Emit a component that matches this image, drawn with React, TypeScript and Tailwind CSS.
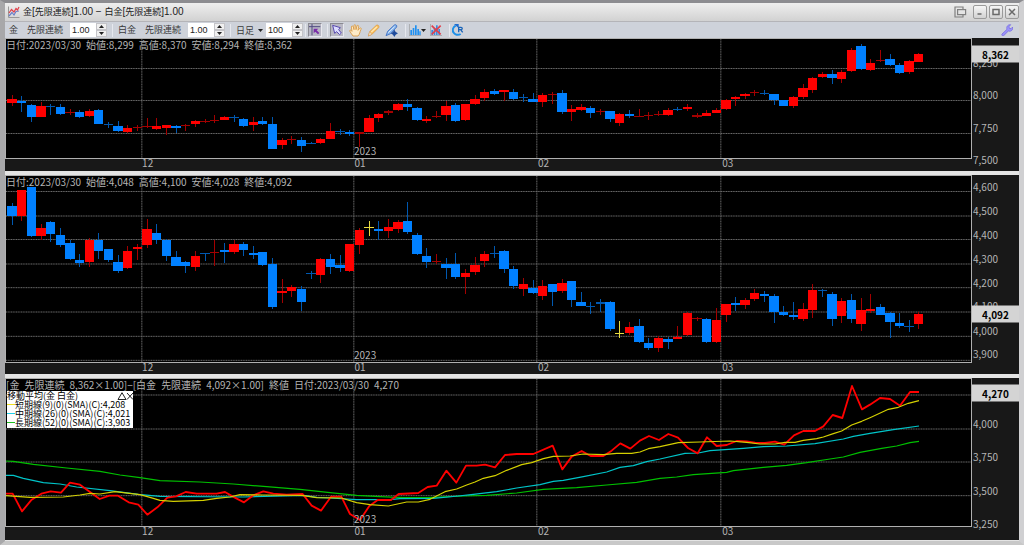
import React from "react";

const JP = "font-['Liberation_Sans','Noto_Sans_CJK_JP',sans-serif]";
const GRID = "font-['Noto_Sans_CJK_JP',sans-serif]";

type Candle = [string, number, number, number, number];
type Point = [number, number];

// kind (r: up, b: down, y: unchanged), body top, body bottom, wick top, wick bottom
const GOLD: Candle[] = [
  ["r", 188, 200, 177, 211], ["b", 195, 200, 179, 227], ["b", 206, 243, 204, 257], ["r", 209, 243, 198, 243],
  ["b", 209, 213, 205, 238], ["b", 213, 235, 203, 237], ["r", 228, 231, 220, 237], ["b", 228, 243, 222, 247],
  ["r", 224, 241, 219, 244], ["b", 223, 264, 219, 265], ["b", 263, 266, 259, 275], ["b", 270, 285, 255, 287],
  ["r", 275, 288, 268, 292], ["r", 273, 276, 266, 285], ["r", 270, 273, 245, 276], ["r", 271, 280, 247, 282],
  ["r", 268, 275, 266, 297], ["b", 271, 277, 268, 291], ["r", 266, 270, 264, 285], ["r", 254, 263, 252, 274],
  ["r", 255, 257, 250, 262], ["r", 251, 254, 236, 262], ["r", 243, 251, 240, 253], ["b", 243, 246, 237, 259],
  ["b", 249, 270, 245, 274], ["r", 257, 268, 242, 285], ["b", 255, 263, 242, 268], ["b", 264, 339, 243, 339],
  ["r", 313, 327, 305, 338], ["r", 309, 312, 300, 324], ["b", 312, 329, 304, 348], ["b", 320, 323, 318, 325],
  ["r", 308, 322, 305, 323], ["r", 286, 308, 262, 309], ["b", 285, 288, 279, 298], ["b", 288, 293, 282, 301],
  ["r", 289, 293, 289, 334], ["r", 246, 287, 238, 287], ["r", 234, 245, 230, 258], ["r", 226, 230, 221, 237],
  ["r", 203, 223, 201, 224], ["b", 203, 214, 189, 225], ["b", 216, 251, 214, 254], ["r", 248, 256, 239, 262],
  ["r", 240, 244, 226, 247], ["r", 210, 238, 196, 254], ["b", 207, 256, 202, 259], ["r", 203, 251, 203, 254],
  ["r", 189, 204, 177, 207], ["r", 168, 185, 160, 196], ["b", 165, 174, 159, 177], ["r", 162, 169, 161, 196],
  ["b", 167, 188, 160, 191], ["b", 183, 186, 174, 197], ["b", 190, 198, 172, 199], ["r", 177, 197, 172, 212],
  ["r", 173, 176, 169, 205], ["b", 170, 228, 161, 233], ["r", 219, 228, 207, 254], ["r", 213, 222, 204, 226],
  ["b", 215, 230, 210, 245], ["r", 225, 228, 219, 237], ["b", 226, 249, 224, 259], ["r", 234, 261, 232, 270],
  ["b", 234, 240, 222, 246], ["r", 239, 243, 219, 244], ["r", 237, 240, 227, 252], ["r", 233, 236, 224, 239],
  ["r", 222, 238, 217, 240], ["b", 219, 223, 214, 226], ["r", 214, 220, 205, 226], ["r", 238, 242, 232, 247],
  ["r", 231, 240, 222, 241], ["r", 222, 231, 215, 232], ["r", 191, 220, 190, 223], ["r", 184, 190, 179, 209],
  ["r", 174, 181, 170, 190], ["r", 168, 172, 162, 181], ["b", 170, 174, 162, 178], ["b", 174, 193, 174, 207],
  ["b", 193, 209, 191, 211], ["r", 184, 209, 181, 216], ["r", 157, 184, 145, 190], ["r", 127, 161, 122, 171],
  ["r", 115, 124, 108, 127], ["b", 115, 126, 103, 143], ["r", 108, 129, 102, 141], ["r", 43, 104, 36, 107],
  ["b", 31, 98, 24, 103], ["r", 81, 102, 68, 104], ["r", 72, 76, 42, 77], ["b", 70, 87, 55, 91],
  ["b", 87, 112, 82, 115], ["r", 76, 107, 72, 115], ["r", 55, 77, 50, 78],
];

const PLATINUM: Candle[] = [
  ["b", 101, 131, 94, 159], ["r", 54, 133, 54, 147], ["b", 44, 191, 44, 194], ["r", 167, 191, 156, 204],
  ["b", 150, 186, 148, 209], ["b", 188, 218, 169, 224], ["b", 212, 261, 205, 263], ["b", 264, 272, 245, 284],
  ["r", 205, 269, 198, 284], ["b", 203, 236, 183, 261], ["b", 231, 263, 231, 271], ["b", 269, 296, 250, 302],
  ["r", 238, 287, 222, 292], ["r", 226, 231, 216, 263], ["r", 170, 218, 141, 227], ["b", 183, 203, 157, 216],
  ["b", 204, 251, 202, 267], ["b", 256, 282, 237, 283], ["b", 270, 282, 266, 302], ["r", 252, 284, 238, 296],
  ["b", 243, 246, 243, 266], ["r", 240, 244, 205, 281], ["b", 234, 239, 214, 272], ["r", 217, 239, 203, 245],
  ["b", 217, 234, 210, 253], ["b", 242, 248, 222, 261], ["b", 240, 279, 240, 281], ["b", 276, 404, 257, 411],
  ["r", 356, 364, 320, 392], ["r", 345, 357, 338, 375], ["b", 351, 390, 342, 416], ["b", 303, 307, 297, 320],
  ["r", 260, 308, 258, 333], ["b", 260, 284, 245, 305], ["b", 278, 288, 250, 300], ["r", 217, 296, 216, 299],
  ["r", 174, 220, 168, 246], ["y", 165, 168, 146, 192], ["b", 170, 178, 146, 203], ["r", 165, 178, 142, 199],
  ["r", 149, 171, 144, 182], ["b", 146, 181, 90, 187], ["b", 190, 246, 182, 248], ["b", 252, 270, 228, 289],
  ["r", 266, 270, 247, 277], ["b", 276, 288, 259, 320], ["b", 276, 315, 242, 321], ["r", 304, 315, 290, 366],
  ["r", 278, 300, 255, 309], ["r", 247, 268, 238, 284], ["b", 242, 245, 223, 259], ["b", 236, 291, 234, 303],
  ["b", 292, 341, 283, 351], ["r", 337, 352, 319, 371], ["b", 348, 364, 323, 366], ["r", 342, 371, 325, 384],
  ["b", 335, 360, 335, 402], ["r", 332, 357, 321, 363], ["b", 328, 385, 328, 404], ["b", 389, 402, 360, 403],
  ["b", 402, 405, 391, 425], ["b", 391, 395, 381, 419], ["b", 391, 472, 387, 476], ["y", 483, 486, 448, 497],
  ["r", 466, 482, 450, 488], ["b", 462, 510, 440, 512], ["b", 514, 527, 499, 534], ["r", 499, 527, 493, 541],
  ["b", 502, 510, 496, 531], ["r", 495, 500, 461, 501], ["r", 424, 489, 420, 491], ["r", 437, 441, 435, 448],
  ["b", 441, 510, 438, 514], ["r", 444, 510, 407, 512], ["r", 396, 430, 395, 449], ["b", 393, 399, 376, 416],
  ["r", 384, 400, 378, 411], ["r", 363, 381, 351, 387], ["b", 366, 372, 356, 390], ["b", 372, 419, 367, 452],
  ["b", 420, 429, 402, 431], ["b", 429, 435, 391, 444], ["r", 412, 441, 393, 446], ["r", 354, 413, 337, 439],
  ["b", 353, 357, 350, 374], ["b", 365, 441, 360, 461], ["r", 387, 433, 378, 453], ["b", 384, 442, 365, 452],
  ["r", 415, 456, 377, 478], ["r", 412, 418, 365, 423], ["b", 405, 429, 396, 430], ["b", 424, 449, 420, 498],
  ["b", 453, 461, 422, 468], ["b", 462, 465, 444, 480], ["r", 426, 456, 420, 470],
];

const shift = (dx: number, pts: Point[]): Point[] => pts.map(([x, y]) => [x + dx, y]);

const SPREAD: Point[] = [
  [18, 371], [38, 371], [66, 424], [95, 389], [124, 371], [152, 364], [183, 368], [210, 338], [240, 344],
  [270, 366], [299, 387], [328, 377], [354, 377], [386, 397], [415, 404], [442, 434], [472, 412], [502, 383],
  [528, 379], [557, 366], [590, 371], [650, 371], [675, 366], [703, 382], [732, 397], [760, 376], [790, 364],
  [820, 371], [860, 374], [908, 372], [935, 407], [963, 422], [993, 380],
  ...shift(990, [
    [34, 380], [60, 432], [90, 450], [118, 408], [143, 390], [183, 390], [206, 372], [265, 369], [293, 351],
    [320, 347], [349, 302], [379, 338], [408, 287], [440, 287], [465, 284], [495, 292], [525, 255], [560, 252],
    [610, 252], [668, 227], [697, 298], [725, 260], [755, 243], [782, 258], [820, 258], [845, 242], [871, 220],
    [901, 236], [930, 212], [957, 198], [987, 210],
  ]),
  ...shift(1980, [
    [25, 192], [54, 203], [84, 234], [113, 250], [141, 202], [170, 228], [200, 225], [230, 213], [260, 214],
    [285, 218], [315, 219], [345, 215], [373, 224], [402, 196], [430, 183], [465, 183], [490, 169], [518, 135],
    [547, 144], [576, 48], [606, 118], [630, 104], [660, 84], [690, 87], [720, 107], [750, 66], [777, 66],
  ]),
];

const SHORT_MA: Point[] = [
  [18, 377], [90, 382], [190, 381], [240, 375], [270, 370], [300, 372], [345, 365], [420, 374], [450, 382],
  [480, 391], [520, 394], [610, 391], [650, 385], [690, 381], [720, 374], [790, 375], [905, 376], [950, 383],
  ...shift(990, [
    [34, 384], [80, 398], [120, 404], [175, 408], [230, 396], [265, 396], [300, 388], [345, 365], [380, 357],
    [410, 345], [435, 336], [460, 325], [495, 317], [530, 301], [575, 284], [605, 278], [640, 266], [670, 259],
    [720, 258], [760, 252], [820, 254], [860, 250], [905, 250], [930, 246], [955, 236],
  ]),
  ...shift(1980, [
    [0, 230], [55, 218], [120, 216], [210, 213], [260, 217], [300, 222], [345, 222], [375, 217], [405, 217],
    [430, 211], [470, 206], [490, 201], [520, 191], [545, 183], [575, 165], [605, 154], [630, 143], [685, 118],
    [715, 112], [745, 100], [777, 92],
  ]),
];

const MID_MA: Point[] = [
  [18, 316], [40, 316], [70, 325], [130, 338], [180, 342], [230, 351], [330, 362], [415, 373], [480, 379],
  [730, 381], [910, 376], [950, 382],
  ...shift(990, [
    [0, 384], [80, 389], [180, 389], [210, 386], [310, 385], [385, 378], [430, 373], [500, 365], [560, 354],
    [630, 344], [670, 334], [700, 331], [760, 320], [830, 306], [870, 292], [910, 287], [950, 275],
  ]),
  ...shift(1980, [
    [0, 267], [75, 250], [115, 249], [150, 242], [250, 235], [310, 230], [380, 228], [465, 221], [550, 207],
    [580, 199], [630, 190], [700, 179], [777, 168],
  ]),
];

const LONG_MA: Point[] = [
  [18, 273], [40, 274], [100, 283], [200, 294], [300, 304], [360, 315], [420, 323], [480, 332], [600, 336],
  [700, 342], [800, 350], [900, 358],
  ...shift(990, [
    [0, 368], [80, 376], [150, 380], [220, 383], [290, 383], [400, 378], [470, 376], [560, 369], [640, 358],
    [740, 353], [830, 345], [920, 337],
  ]),
  ...shift(1980, [
    [0, 325], [50, 321], [100, 314], [200, 307], [220, 302], [310, 292], [380, 286], [440, 278], [510, 267],
    [550, 261], [600, 247], [665, 235], [710, 228], [750, 218], [777, 214],
  ]),
];

const X0 = 18;
const XW = 2895;
const MONTHS = [
  { label: "12", x: 425.5 },
  { label: "01", x: 1061.5 },
  { label: "02", x: 1610.5 },
  { label: "03", x: 2162.5 },
];
const pct = (x: number) => `${((x - X0) / XW) * 100}%`;

const BODY: Record<string, string> = { r: "#ff0000", b: "#0080ff", y: "#e8dc40" };
const WICK: Record<string, string> = { r: "#a40000", b: "#0058b0", y: "#e8dc40" };

function Candles({ data }: { data: Candle[] }) {
  return (
    <g shapeRendering="crispEdges">
      {data.map(([k, top, bot, hi, lo], i) => {
        const x = 36 + i * 28.94;
        const thin = bot - top < 5;
        return (
          <g key={i}>
            <rect x={x - 1} y={hi} width={3} height={lo - hi} fill={WICK[k]} />
            <rect x={x - 14} y={top} width={28} height={Math.max(3, bot - top)} fill={thin ? WICK[k] : BODY[k]} />
          </g>
        );
      })}
    </g>
  );
}

function Line({ pts, color, width }: { pts: Point[]; color: string; width: number }) {
  return (
    <polyline
      points={pts.map((p) => p.join(",")).join(" ")}
      fill="none"
      stroke={color}
      strokeWidth={width}
      strokeLinejoin="round"
    />
  );
}

interface PaneProps {
  top: number;
  height: number;
  svgClass: string;
  axisClass: string;
  grid: number[];
  ticks: { label: string; y: number }[];
  current: { label: string; y: number };
  header: React.ReactNode;
  legend?: React.ReactNode;
  children: React.ReactNode;
}

function Pane({ top, height, svgClass, axisClass, grid, ticks, current, header, legend, children }: PaneProps) {
  return (
    <section className={`flex bg-[#181818] text-[10px] leading-none text-[#b4b4b4] ${GRID}`}>
      <div className="min-w-0 flex-1">
        <div className="relative border border-[#b0b0b0] bg-black">
          <svg
            className={`block w-full ${svgClass}`}
            viewBox={`${X0} ${top} ${XW} ${height}`}
            preserveAspectRatio="none"
            role="img"
          >
            <g stroke="#686868" strokeWidth="3" strokeDasharray="3.5 1.5">
              {grid.map((y) => (
                <line key={y} x1={X0} x2={X0 + XW} y1={y} y2={y} />
              ))}
              {MONTHS.map((m) => (
                <line key={m.label} x1={m.x} x2={m.x} y1={top} y2={top + height} />
              ))}
            </g>
            {children}
          </svg>
          <div className="absolute left-0 top-px whitespace-nowrap">{header}</div>
          {legend}
          <span className="absolute bottom-0.5" style={{ left: pct(1062) }}>
            2023
          </span>
        </div>
        <div className={`relative ${axisClass}`}>
          {MONTHS.map((m) => (
            <span key={m.label} className="absolute -top-px ml-px" style={{ left: pct(m.x) }}>
              {m.label}
            </span>
          ))}
        </div>
      </div>
      <div className="relative w-[47px]">
        {ticks.map((t) => (
          <span key={t.label} className="absolute left-px -translate-y-1/2" style={{ top: t.y }}>
            {t.label}
          </span>
        ))}
        <output
          className="absolute left-0 flex h-[17px] w-full -translate-y-1/2 items-center justify-center bg-[#d4d4d4] font-bold text-black"
          style={{ top: current.y }}
        >
          {current.label}
        </output>
      </div>
    </section>
  );
}

function Quote({ items }: { items: string[] }) {
  return (
    <p className="flex gap-[5px]">
      {items.map((s, i) => (
        <span key={i}>{s}</span>
      ))}
    </p>
  );
}

function Stepper({ id, value, label }: { id: string; value: string; label: string }) {
  return (
    <div className="flex h-[14px] w-[37px] bg-white">
      <input
        id={id}
        aria-label={label}
        defaultValue={value}
        className={`w-[26px] min-w-0 bg-white pl-0.5 text-[9px] leading-none text-[#222] outline-none ${JP}`}
      />
      <div className="flex w-[11px] flex-col">
        {["up", "down"].map((d) => (
          <button
            key={d}
            aria-label={`${label} ${d}`}
            className="flex h-[7px] items-center justify-center border border-[#c4c4c8] bg-[#f0f0f0]"
          >
            <svg width="5" height="3" viewBox="0 0 5 3">
              <path d={d === "up" ? "M0 3L2.5 0L5 3z" : "M0 0h5L2.5 3z"} fill="#222" />
            </svg>
          </button>
        ))}
      </div>
    </div>
  );
}

const Sep = ({ className }: { className: string }) => (
  <span className={`h-[13px] w-px border-r border-[#e6e8ee] bg-[#bcc0c8] ${className}`} />
);

function Tool({
  label,
  className,
  pressed,
  children,
}: {
  label: string;
  className: string;
  pressed?: boolean;
  children: React.ReactNode;
}) {
  return (
    <button
      aria-label={label}
      className={`flex h-[14px] shrink-0 items-center justify-center ${
        pressed ? "border border-[#8a8a92] border-b-[#e8e8ee] border-r-[#e8e8ee] bg-[#b8b8c4]" : ""
      } ${className}`}
    >
      {children}
    </button>
  );
}

const Caret = () => (
  <svg width="5" height="3" viewBox="0 0 5 3">
    <path d="M0 0h5L2.5 3z" fill="#222" />
  </svg>
);

function WinButton({ label, children }: { label: string; children: React.ReactNode }) {
  return (
    <button
      aria-label={label}
      className="flex h-[14px] w-[14px] items-center justify-center rounded-[2px] border border-[#9a9a9a] bg-linear-to-b from-[#f6f6f6] to-[#d2d2d2]"
    >
      <svg width="8" height="8" viewBox="0 0 8 8" fill="none" stroke="#6a6a6a" strokeWidth="1.5">
        {children}
      </svg>
    </button>
  );
}

const Kanji = ({ children }: { children: string }) => <span className="text-[9px]">{children}</span>;

function TitleBar() {
  return (
    <header className="flex h-[18px] items-center bg-linear-to-b from-[#eeeeee] to-[#d2d2d2] pl-[3px]">
      <svg width="12" height="12" viewBox="0 0 12 12" fill="none">
        <path d="M.5 .5v11h11" stroke="#999" />
        <path d="M1 10L4 6.500L6 9L8 5.500L11 5" stroke="#6a7ec8" strokeWidth="1.2" />
        <path d="M1 7L3.500 3.500L6 6L8 2.500L9.500 4L11 1" stroke="#e0404a" strokeWidth="1.2" />
      </svg>
      <h1 className="ml-[3px] whitespace-nowrap text-[10px] leading-none text-[#1c1c1c]">
        <Kanji>金</Kanji>[<Kanji>先限連続</Kanji>]1.00 − <Kanji>白金</Kanji>[<Kanji>先限連続</Kanji>]1.00
      </h1>
      <div className="ml-auto flex items-center gap-0.5">
        <button aria-label="別ウィンドウ" className="mr-1 flex h-[14px] items-center">
          <svg width="13" height="12" viewBox="0 0 13 12" fill="none" stroke="#808080" strokeWidth="1.2">
            <path d="M9 3V1H1v10h8V9" />
            <rect x="3.600" y="3.600" width="8" height="5" fill="#e4e4e4" />
          </svg>
        </button>
        <WinButton label="最小化">
          <path d="M1.500 6h4" />
        </WinButton>
        <WinButton label="最大化">
          <path d="M1 1.500h6v5H1z" />
        </WinButton>
        <WinButton label="閉じる">
          <path d="M1 1l6 6M7 1L1 7" />
        </WinButton>
      </div>
    </header>
  );
}

function Toolbar() {
  return (
    <nav className="flex h-[17px] items-center border-t border-[#b4b4b8] bg-[#ced2da] pl-1 text-[9px] leading-none text-[#3a3a3a]">
      <label htmlFor="gold">金</label>
      <span className="ml-[9px] w-[43px]">先限連続</span>
      <Stepper id="gold" value="1.00" label="金 倍率" />
      <Sep className="mx-[5px]" />
      <label htmlFor="platinum">白金</label>
      <span className="ml-[9px] w-[43px]">先限連続</span>
      <Stepper id="platinum" value="1.00" label="白金 倍率" />
      <Sep className="mx-[5px]" />
      <div className="relative flex items-center">
        <select
          aria-label="足種"
          className={`h-[15px] w-[30px] appearance-none bg-transparent p-0 text-[9px] leading-[15px] outline-none ${GRID}`}
        >
          <option>日足</option>
        </select>
        <span className="pointer-events-none absolute right-[3px]">
          <Caret />
        </span>
      </div>
      <Stepper id="bars" value="100" label="本数" />
      <Sep className="mx-[2px]" />

      <Tool label="十字カーソル" pressed className="w-[14px]">
        <svg width="12" height="12" viewBox="0 0 36 36" fill="none">
          <path d="M0 8h34M9 0v34" stroke="#504a80" strokeWidth="3" />
          <path d="M14 14h14l-5 5l8 8l-4 4l-8-8l-5 5z" fill="#7a2ca8" />
        </svg>
      </Tool>
      <Sep className="ml-[5px] mr-[2px]" />
      <Tool label="選択" pressed className="w-[14px]">
        <svg width="12" height="12" viewBox="0 0 36 36">
          <path d="M5 4l23 7l-5 6l8 10l-5 5l-9-9l-6 5z" fill="#dcdcff" stroke="#5a4ab0" strokeWidth="3" />
        </svg>
      </Tool>
      <Tool label="移動" className="ml-[5px] w-[13px]">
        <svg width="13" height="13" viewBox="0 0 39 39">
          <path
            d="M12 36C8 30 4 25 2 21c0-4 4-3 7 1L7 9c0-4 5-4 6 0l2 8V5c0-4 5-4 5 0l1 12l3-11c1-4 5-2 5 1l-2 12l5-6c3-3 6 0 4 3c-4 8-3 14-9 20z"
            fill="#fdebc8"
            stroke="#d8963c"
            strokeWidth="2.500"
          />
        </svg>
      </Tool>
      <Tool label="鉛筆" className="ml-[5px] w-[13px]">
        <svg width="13" height="13" viewBox="0 0 39 39">
          <path d="M4 36l4-13L28 4c4-3 10 2 7 7L15 31z" fill="#fbc060" stroke="#d89030" strokeWidth="2" />
          <path d="M13 24L30 8" stroke="#ffe8b0" strokeWidth="4" />
          <path d="M4 36l4-13l7 8z" fill="#f4dcc0" stroke="#c08850" />
        </svg>
      </Tool>
      <Tool label="描画ツール" className="ml-[5px] w-[13px]">
        <svg width="13" height="13" viewBox="0 0 39 39">
          <path d="M3 35L8 22L28 3c4-3 9 1 7 6L17 29z" fill="#86b4ec" stroke="#3a6cc0" strokeWidth="2.500" />
          <path d="M10 26L29 8" stroke="#e0f0ff" strokeWidth="3" />
          <path d="M28 17l4 7l7 4l-7 4l-4 7l-4-7l-7-4l7-4z" fill="#204c9c" />
        </svg>
      </Tool>
      <Sep className="ml-[7px] mr-[2px]" />
      <Tool label="指標追加" className="w-[18px] justify-between">
        <svg width="12" height="12" viewBox="0 0 36 36">
          <path d="M1 0v35h35" stroke="#909090" strokeWidth="2" fill="none" />
          <path d="M4 18h5v15H4zM11 12h5v21h-5zM18 4h5v29h-5zM25 15h5v18h-5zM31 22h4v11h-4z" fill="#2090f0" />
        </svg>
        <Caret />
      </Tool>
      <Tool label="指標削除" className="ml-[4px] w-[12px]">
        <svg width="12" height="12" viewBox="0 0 36 36">
          <path d="M1 0v35h35" stroke="#909090" strokeWidth="2" fill="none" />
          <path d="M4 18h5v15H4zM11 12h5v21h-5zM18 4h5v29h-5zM25 15h5v18h-5z" fill="#3a8ce0" />
          <path d="M5 5l27 26M32 5L5 31" stroke="#e0404c" strokeWidth="5" />
        </svg>
      </Tool>
      <Sep className="ml-[7px] mr-[2px]" />
      <Tool label="更新" className="w-[12px]">
        <svg width="12" height="12" viewBox="0 0 36 36" fill="none">
          <path d="M11 5C3 9 1 18 4 25c4 7 14 10 22 5" stroke="#1e90e8" strokeWidth="6" />
          <path d="M6 0h14v13z" fill="#1e6cd0" />
          <path d="M20 25V10h7c5 0 5 7 0 7h-6M26 17l6 8" stroke="#1a64b8" strokeWidth="4" />
        </svg>
      </Tool>
      <Tool label="設定" className="ml-auto mr-[6px] w-[12px]">
        <svg width="12" height="12" viewBox="0 0 36 36">
          <path
            d="M3 30L18 16c-3-8 3-15 11-14l-5 6l1 5l5 1l5-5c2 9-6 15-13 12L8 35c-4 2-7-2-5-5z"
            fill="#9c94fa"
            stroke="#6c60e0"
            strokeWidth="2"
          />
        </svg>
      </Tool>
    </nav>
  );
}

const LEGEND = [
  { text: "短期線(9)(0)(SMA)(C):4,208", bar: "bg-[#f0e020]" },
  { text: "中期線(26)(0)(SMA)(C):4,021", bar: "bg-[#20d0e8]" },
  { text: "長期線(52)(0)(SMA)(C):3,903", bar: "bg-[#20c020]" },
];

function Legend() {
  return (
    <div className="absolute left-px top-3 w-[126px] bg-white pb-px text-[9px] leading-[9px] text-black">
      <div className="flex items-center justify-between whitespace-nowrap">
        <span>移動平均(金 白金)</span>
        <svg width="16" height="8" viewBox="0 0 16 8" fill="none" stroke="#222">
          <path d="M5 .7L9 7.500H1zM10 1l6 6.500M16 1l-6 6.500" />
        </svg>
      </div>
      <ul>
        {LEGEND.map((l) => (
          <li key={l.text} className="flex items-center whitespace-nowrap">
            <span className={`h-px w-2 ${l.bar}`} />
            {l.text}
          </li>
        ))}
      </ul>
    </div>
  );
}

export default function App() {
  return (
    <main
      className={`min-h-screen border-x-[5px] border-b-4 border-t-[3px] border-b-[#c8c8c8] border-l-[#a8a8aa] border-r-[#d0d0d2] border-t-[#8c8c90] bg-[#e4e4e4] ${JP}`}
    >
      <TitleBar />
      <Toolbar />
      <div className="flex flex-col gap-1">
        <Pane
          top={9}
          height={357}
          svgClass="h-[119px]"
          axisClass="h-[12px]"
          grid={[97.5, 193.5, 292.5]}
          ticks={[
            { label: "8,250", y: 25 },
            { label: "8,000", y: 57 },
            { label: "7,750", y: 90 },
            { label: "7,500", y: 122 },
          ]}
          current={{ label: "8,362", y: 16 }}
          header={<Quote items={["日付:2023/03/30", "始値:8,299", "高値:8,370", "安値:8,294", "終値:8,362"]} />}
        >
          <Candles data={GOLD} />
        </Pane>
        <Pane
          top={12}
          height={558}
          svgClass="h-[186px]"
          axisClass="h-[11px]"
          grid={[58.5, 132, 202.5, 276, 347, 420, 493, 565]}
          ticks={[
            { label: "4,600", y: 12 },
            { label: "4,500", y: 36 },
            { label: "4,400", y: 60 },
            { label: "4,300", y: 84 },
            { label: "4,200", y: 108 },
            { label: "4,100", y: 131 },
            { label: "4,000", y: 156 },
            { label: "3,900", y: 179 },
          ]}
          current={{ label: "4,092", y: 139 }}
          header={<Quote items={["日付:2023/03/30", "始値:4,048", "高値:4,100", "安値:4,028", "終値:4,092"]} />}
        >
          <Candles data={PLATINUM} />
        </Pane>
        <Pane
          top={27}
          height={441}
          svgClass="h-[147px]"
          axisClass="h-[13px]"
          grid={[75, 177, 276, 377]}
          ticks={[
            { label: "4,000", y: 46 },
            { label: "3,750", y: 79 },
            { label: "3,500", y: 113 },
            { label: "3,250", y: 146 },
          ]}
          current={{ label: "4,270", y: 15 }}
          header={
            <Quote
              items={[
                "[金",
                "先限連続",
                "8,362×1.00]−[白金",
                "先限連続",
                "4,092×1.00]",
                "終値",
                "日付:2023/03/30",
                "4,270",
              ]}
            />
          }
          legend={<Legend />}
        >
          <Line pts={LONG_MA} color="#00c000" width={3.5} />
          <Line pts={MID_MA} color="#00c4c8" width={3.5} />
          <Line pts={SPREAD} color="#ff0000" width={5.5} />
          <Line pts={SHORT_MA} color="#d4d000" width={3.5} />
        </Pane>
      </div>
    </main>
  );
}
